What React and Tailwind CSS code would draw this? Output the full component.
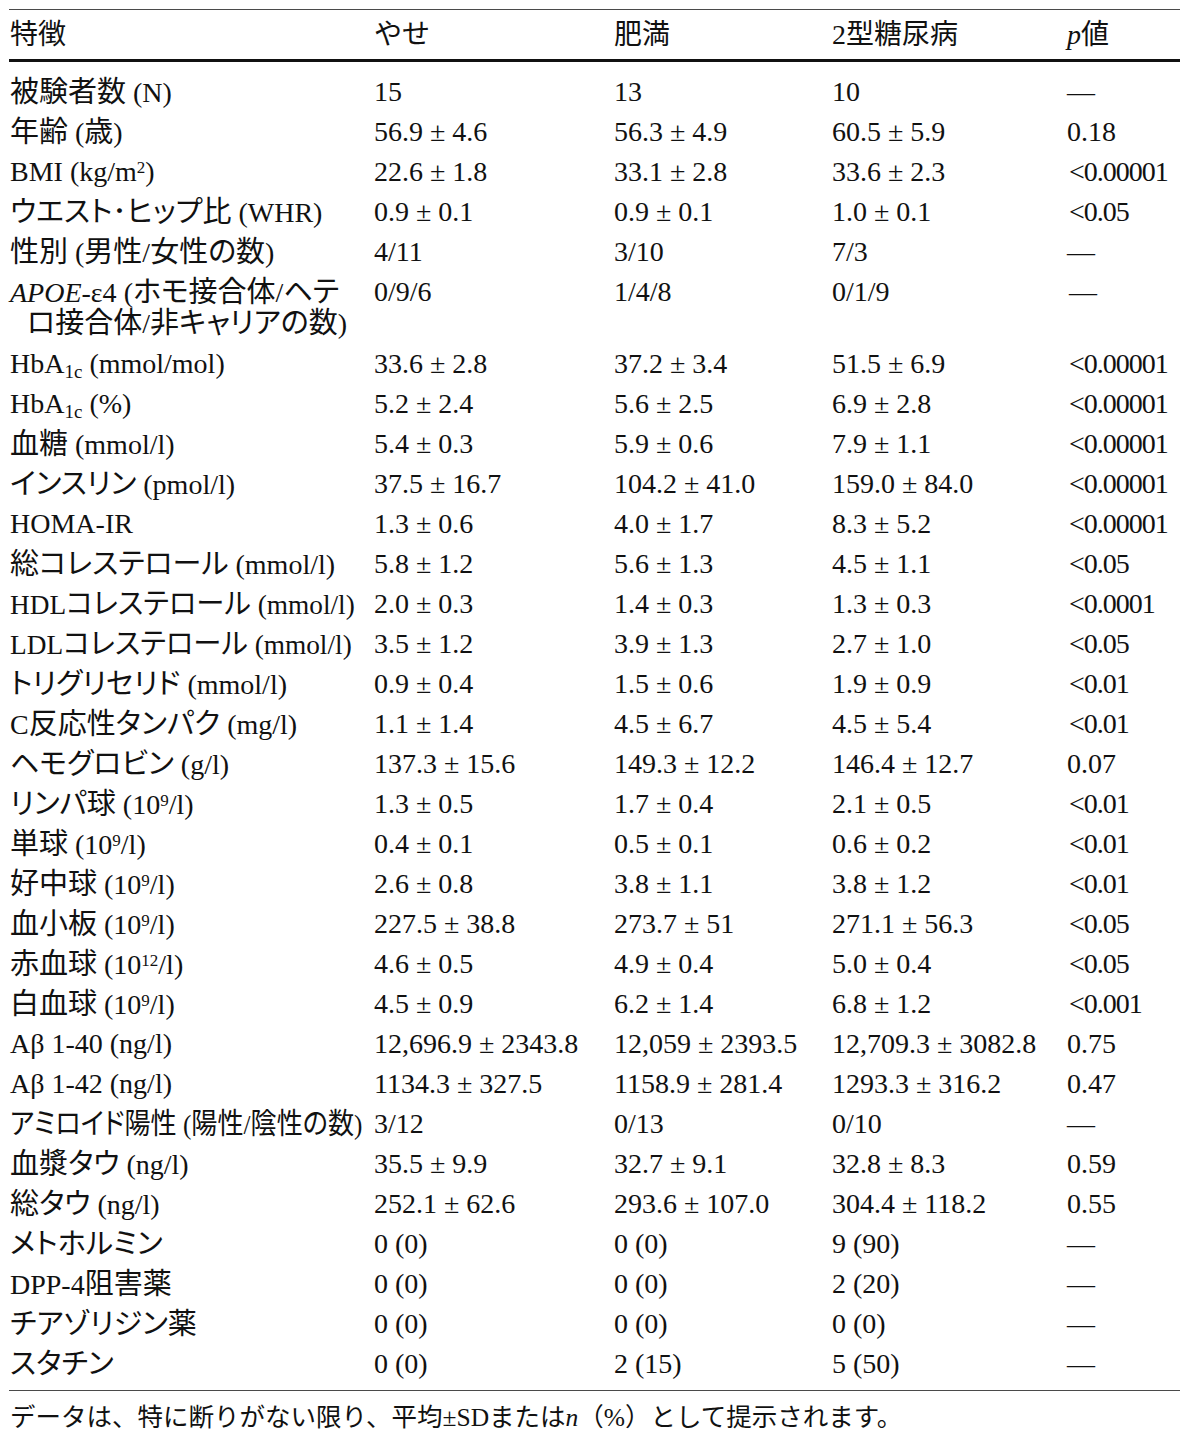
import React from "react";

const F = "font-['Liberation_Serif','Noto_Sans_CJK_JP',serif]";
const CJK = /([\u3000-\u30ff\u4e00-\u9fff\uff00-\uffef]+)/;

function J(parts) {
  const arr = Array.isArray(parts) ? parts : [parts];
  const out = [];
  arr.forEach((p, i) => {
    if (typeof p !== "string") {
      out.push(<React.Fragment key={i}>{p}</React.Fragment>);
      return;
    }
    p.split(CJK).forEach((s, k) => {
      if (!s) return;
      if (CJK.test(s)) {
        out.push(
          <span key={`${i}-${k}`} className="text-[29px] [font-feature-settings:'palt']">
            {s}
          </span>
        );
      } else out.push(<React.Fragment key={`${i}-${k}`}>{s}</React.Fragment>);
    });
  });
  return out;
}

const Sub = ({ children }) => <sub className="text-[19px]">{children}</sub>;
const Sup = ({ children }) => <sup className="text-[17px]">{children}</sup>;

const rows = [
  { l: "被験者数 (N)", t: "", v: ["15", "13", "10", "—"] },
  { l: "年齢 (歳)", t: "", v: ["56.9 ± 4.6", "56.3 ± 4.9", "60.5 ± 5.9", "0.18"] },
  { l: ["BMI (kg/m", <Sup>2</Sup>, ")"], t: "", v: ["22.6 ± 1.8", "33.1 ± 2.8", "33.6 ± 2.3", "<0.00001"] },
  { l: "ウエスト･ヒップ比 (WHR)", t: "", v: ["0.9 ± 0.1", "0.9 ± 0.1", "1.0 ± 0.1", "<0.05"] },
  { l: "性別 (男性/女性の数)", t: "", v: ["4/11", "3/10", "7/3", "—"] },
  { apoe: true, v: ["0/9/6", "1/4/8", "0/1/9", "—"] },
  { l: ["HbA", <Sub>1c</Sub>, " (mmol/mol)"], t: "", v: ["33.6 ± 2.8", "37.2 ± 3.4", "51.5 ± 6.9", "<0.00001"] },
  { l: ["HbA", <Sub>1c</Sub>, " (%)"], t: "", v: ["5.2 ± 2.4", "5.6 ± 2.5", "6.9 ± 2.8", "<0.00001"] },
  { l: "血糖 (mmol/l)", t: "", v: ["5.4 ± 0.3", "5.9 ± 0.6", "7.9 ± 1.1", "<0.00001"] },
  { l: "インスリン (pmol/l)", t: "", v: ["37.5 ± 16.7", "104.2 ± 41.0", "159.0 ± 84.0", "<0.00001"] },
  { l: "HOMA-IR", t: "", v: ["1.3 ± 0.6", "4.0 ± 1.7", "8.3 ± 5.2", "<0.00001"] },
  { l: "総コレステロール (mmol/l)", t: "", v: ["5.8 ± 1.2", "5.6 ± 1.3", "4.5 ± 1.1", "<0.05"] },
  { l: "HDLコレステロール (mmol/l)", t: "scale-x-[0.975] origin-left", v: ["2.0 ± 0.3", "1.4 ± 0.3", "1.3 ± 0.3", "<0.0001"] },
  { l: "LDLコレステロール (mmol/l)", t: "scale-x-[0.975] origin-left", v: ["3.5 ± 1.2", "3.9 ± 1.3", "2.7 ± 1.0", "<0.05"] },
  { l: "トリグリセリド (mmol/l)", t: "", v: ["0.9 ± 0.4", "1.5 ± 0.6", "1.9 ± 0.9", "<0.01"] },
  { l: "C反応性タンパク (mg/l)", t: "", v: ["1.1 ± 1.4", "4.5 ± 6.7", "4.5 ± 5.4", "<0.01"] },
  { l: "ヘモグロビン (g/l)", t: "", v: ["137.3 ± 15.6", "149.3 ± 12.2", "146.4 ± 12.7", "0.07"] },
  { l: ["リンパ球 (10", <Sup>9</Sup>, "/l)"], t: "", v: ["1.3 ± 0.5", "1.7 ± 0.4", "2.1 ± 0.5", "<0.01"] },
  { l: ["単球 (10", <Sup>9</Sup>, "/l)"], t: "", v: ["0.4 ± 0.1", "0.5 ± 0.1", "0.6 ± 0.2", "<0.01"] },
  { l: ["好中球 (10", <Sup>9</Sup>, "/l)"], t: "", v: ["2.6 ± 0.8", "3.8 ± 1.1", "3.8 ± 1.2", "<0.01"] },
  { l: ["血小板 (10", <Sup>9</Sup>, "/l)"], t: "", v: ["227.5 ± 38.8", "273.7 ± 51", "271.1 ± 56.3", "<0.05"] },
  { l: ["赤血球 (10", <Sup>12</Sup>, "/l)"], t: "", v: ["4.6 ± 0.5", "4.9 ± 0.4", "5.0 ± 0.4", "<0.05"] },
  { l: ["白血球 (10", <Sup>9</Sup>, "/l)"], t: "", v: ["4.5 ± 0.9", "6.2 ± 1.4", "6.8 ± 1.2", "<0.001"] },
  { l: "Aβ 1-40 (ng/l)", t: "", v: ["12,696.9 ± 2343.8", "12,059 ± 2393.5", "12,709.3 ± 3082.8", "0.75"] },
  { l: "Aβ 1-42 (ng/l)", t: "", v: ["1134.3 ± 327.5", "1158.9 ± 281.4", "1293.3 ± 316.2", "0.47"] },
  { l: "アミロイド陽性 (陽性/陰性の数)", t: "scale-x-[0.9] origin-left", v: ["3/12", "0/13", "0/10", "—"] },
  { l: "血漿タウ (ng/l)", t: "", v: ["35.5 ± 9.9", "32.7 ± 9.1", "32.8 ± 8.3", "0.59"] },
  { l: "総タウ (ng/l)", t: "", v: ["252.1 ± 62.6", "293.6 ± 107.0", "304.4 ± 118.2", "0.55"] },
  { l: "メトホルミン", t: "", v: ["0 (0)", "0 (0)", "9 (90)", "—"] },
  { l: "DPP-4阻害薬", t: "", v: ["0 (0)", "0 (0)", "2 (20)", "—"] },
  { l: "チアゾリジン薬", t: "", v: ["0 (0)", "0 (0)", "0 (0)", "—"] },
  { l: "スタチン", t: "", v: ["0 (0)", "2 (15)", "5 (50)", "—"] },
];

const GRID = "grid grid-cols-[364px_240px_218px_235px_114px]";

function pClass(x) {
  return x.startsWith("<") ? "pl-[3px] tracking-[-1px]" : "pl-px";
}

function Row({ r }) {
  if (r.apoe) {
    return (
      <div className={`${GRID} h-[72px] pt-[5px] leading-[30px]`}>
        <div className="pl-px flex flex-col whitespace-nowrap">
          <span>
            <i>APOE</i>-ε4 {J("(ホモ接合体/ヘテ")}
          </span>
          <span className="pl-[17px]">{J("ロ接合体/非キャリアの数)")}</span>
        </div>
        {r.v.map((x, i) => (
          <div key={i} className={`whitespace-nowrap ${i === 3 ? "pl-[3px]" : "pl-px"}`}>
            {x}
          </div>
        ))}
      </div>
    );
  }
  return (
    <div className={`${GRID} h-[40px] leading-[40px]`}>
      <div className="pl-px">
        <div className={`whitespace-nowrap ${r.t}`}>{J(r.l)}</div>
      </div>
      {r.v.map((x, i) => (
        <div key={i} className={`whitespace-nowrap ${i === 3 ? pClass(x) : "pl-px"}`}>
          {x}
        </div>
      ))}
    </div>
  );
}

export default function App() {
  return (
    <div className={`${F} bg-white text-[#111] text-[28px] w-[1200px] h-[1440px] pt-[9px] pl-[9px]`}>
      <div className="w-[1171px]">
        <div className="h-px bg-[#4a4a4a]" />
        <div className={`${GRID} h-[49px] items-center`}>
          <div className="pl-px">特徴</div>
          <div className="pl-px">やせ</div>
          <div className="pl-px">肥満</div>
          <div className="pl-px">2型糖尿病</div>
          <div className="pl-px">
            <i>p</i>値
          </div>
        </div>
        <div className="h-[3px] bg-[#111]" />
        <div className="h-[10px]" />
        {rows.map((r, i) => (
          <Row key={i} r={r} />
        ))}
        <div className="h-[6px]" />
        <div className="h-px bg-[#4a4a4a]" />
        <div className="mt-[9px] text-[25.5px] leading-[36px] pl-px whitespace-nowrap">
          データは、特に断りがない限り、平均±SDまたは<i>n</i>（%）として提示されます。
        </div>
      </div>
    </div>
  );
}
